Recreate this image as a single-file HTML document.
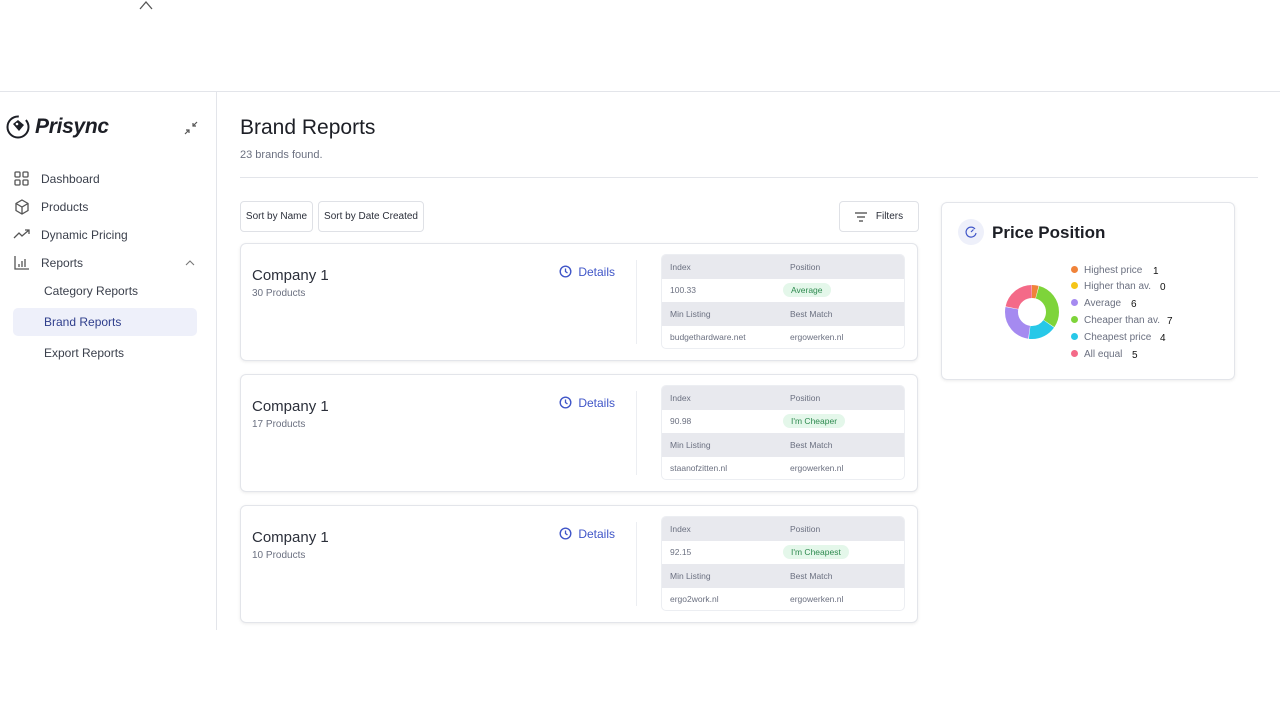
<!DOCTYPE html><html><head><style>
*{box-sizing:border-box;margin:0;padding:0}
body{width:1280px;height:720px;background:#fff;font-family:"Liberation Sans",sans-serif;position:relative;overflow:hidden;color:#2b2f3a}
.a{position:absolute}
.nav{font-size:12px;color:#3a3f4b}
.card{position:absolute;left:240px;width:678px;height:118px;border:1px solid #e3e5ea;border-radius:6px;box-shadow:0 1px 3px rgba(0,0,0,.08);background:#fff}
.card .t{position:absolute;left:11px;top:23px;font-size:15px;color:#2b2f3a}
.card .s{position:absolute;left:11px;top:44px;font-size:10px;color:#6b7080}
.card .d{position:absolute;left:318px;top:21px;font-size:12px;color:#4056c8}
.card .sep{position:absolute;left:395px;top:16px;width:1px;height:84px;background:#eceef2}
.tb{position:absolute;left:420px;top:11px;width:244px;height:95px;border-radius:5px;overflow:hidden;border:1px solid #eceef2;font-size:8.5px;color:#6b7080}
.r{height:23.5px;display:flex;align-items:center;position:relative}
.r span{position:absolute;left:8px}.r span+span{left:128px}
.h{background:#e8e9ee}
.pill{background:#e4f7ea;color:#2e8a4f;border-radius:9px;padding:2px 8px;margin-left:-7px}
.btn{position:absolute;top:201px;height:31px;border:1px solid #dfe1e6;border-radius:4px;font-size:10px;display:flex;align-items:center;justify-content:center;color:#2b2f3a}
.lg{position:absolute;left:1071px;font-size:10px;color:#6b7080}
.lg i{display:inline-block;width:7px;height:7px;border-radius:50%;margin-right:6px}
.lg b{font-weight:normal;color:#111;position:absolute;top:1px}
</style></head><body>
<svg class="a" style="left:138px;top:0" width="16" height="10"><path d="M2 9 L8 2 L14 9" fill="none" stroke="#555" stroke-width="1.3"/></svg>
<div class="a" style="left:0;top:91px;width:1280px;height:1px;background:#e3e5ea"></div>
<div class="a" style="left:216px;top:92px;width:1px;height:538px;background:#e3e5ea"></div>
<svg class="a" style="left:5px;top:114px" width="28" height="28" viewBox="0 0 28 28"><circle cx="13" cy="13" r="10.5" fill="none" stroke="#1d1f26" stroke-width="2" stroke-dasharray="50 8"/><path d="M8 10 L13 6 L19 11 L14 17 Z" fill="#1d1f26"/><circle cx="12" cy="10" r="1.3" fill="#fff"/></svg>
<div class="a" style="left:35px;top:115px;font-size:21px;font-style:italic;font-weight:bold;color:#1d1f26;letter-spacing:-0.3px">Prisync</div>
<svg class="a" style="left:183px;top:120px" width="16" height="16"><path d="M14 2 L10 6 M10 3 V6 H13 M2 14 L6 10 M3 10 H6 V13" fill="none" stroke="#555" stroke-width="1.2"/></svg>
<svg class="a" style="left:14px;top:171px" width="16" height="16"><g fill="none" stroke="#555" stroke-width="1.3"><rect x="1" y="1" width="5" height="5" rx="1"/><rect x="9" y="1" width="5" height="5" rx="1"/><rect x="1" y="9" width="5" height="5" rx="1"/><rect x="9" y="9" width="5" height="5" rx="1"/></g></svg>
<div class="a nav" style="left:41px;top:172px">Dashboard</div>
<svg class="a" style="left:14px;top:199px" width="16" height="16"><g fill="none" stroke="#555" stroke-width="1.3"><path d="M8 1 L14 4.5 V11.5 L8 15 L2 11.5 V4.5 Z M2 4.5 L8 8 L14 4.5 M8 8 V15"/></g></svg>
<div class="a nav" style="left:41px;top:200px">Products</div>
<svg class="a" style="left:13px;top:228px" width="18" height="12"><path d="M1 10 L6 5 L9 8 L16 2 M12 2 H16 V6" fill="none" stroke="#555" stroke-width="1.3"/></svg>
<div class="a nav" style="left:41px;top:228px">Dynamic Pricing</div>
<svg class="a" style="left:14px;top:255px" width="16" height="16"><path d="M1 1 V14 H15 M5 12 V9 M8 12 V6 M11 12 V4" fill="none" stroke="#555" stroke-width="1.3"/></svg>
<div class="a nav" style="left:41px;top:256px">Reports</div>
<svg class="a" style="left:185px;top:259px" width="10" height="7"><path d="M1 6 L5 2 L9 6" fill="none" stroke="#777" stroke-width="1.1"/></svg>
<div class="a nav" style="left:44px;top:284px">Category Reports</div>
<div class="a" style="left:13px;top:308px;width:184px;height:28px;background:#eef0fa;border-radius:5px"></div>
<div class="a nav" style="left:44px;top:315px;color:#2f3e8c">Brand Reports</div>
<div class="a nav" style="left:44px;top:346px">Export Reports</div>

<div class="a" style="left:240px;top:116px;font-size:21px;color:#1d1f26">Brand Reports</div>
<div class="a" style="left:240px;top:149px;font-size:11px;color:#6b7080">23 brands found.</div>
<div class="a" style="left:240px;top:177px;width:1018px;height:1px;background:#e3e5ea"></div>
<div class="btn" style="left:240px;width:73px">Sort by Name</div>
<div class="btn" style="left:318px;width:106px">Sort by Date Created</div>
<div class="btn" style="left:839px;width:80px"><svg width="12" height="10" style="margin-right:9px"><path d="M0 1H12M2 5H10M4 9H8" stroke="#444" stroke-width="1.2"/></svg>Filters</div>

<div class="card" style="top:243px"><div class="t">Company 1</div><div class="s">30 Products</div><div class="d"><svg width="13" height="13" style="vertical-align:-2px;margin-right:3px"><circle cx="6.5" cy="6.5" r="5.3" fill="none" stroke="#4056c8" stroke-width="1.4"/><path d="M6.5 3.5V6.5L8.5 8" fill="none" stroke="#4056c8" stroke-width="1.3"/></svg> Details</div><div class="sep"></div>
<div class="tb" style="top:10px"><div class="r h"><span>Index</span><span>Position</span></div><div class="r"><span>100.33</span><span><i class="pill" style="font-style:normal">Average</i></span></div><div class="r h"><span>Min Listing</span><span>Best Match</span></div><div class="r"><span>budgethardware.net</span><span>ergowerken.nl</span></div></div></div>
<div class="card" style="top:374px"><div class="t">Company 1</div><div class="s">17 Products</div><div class="d"><svg width="13" height="13" style="vertical-align:-2px;margin-right:3px"><circle cx="6.5" cy="6.5" r="5.3" fill="none" stroke="#4056c8" stroke-width="1.4"/><path d="M6.5 3.5V6.5L8.5 8" fill="none" stroke="#4056c8" stroke-width="1.3"/></svg> Details</div><div class="sep"></div>
<div class="tb" style="top:10px"><div class="r h"><span>Index</span><span>Position</span></div><div class="r"><span>90.98</span><span><i class="pill" style="font-style:normal">I'm Cheaper</i></span></div><div class="r h"><span>Min Listing</span><span>Best Match</span></div><div class="r"><span>staanofzitten.nl</span><span>ergowerken.nl</span></div></div></div>
<div class="card" style="top:505px"><div class="t">Company 1</div><div class="s">10 Products</div><div class="d"><svg width="13" height="13" style="vertical-align:-2px;margin-right:3px"><circle cx="6.5" cy="6.5" r="5.3" fill="none" stroke="#4056c8" stroke-width="1.4"/><path d="M6.5 3.5V6.5L8.5 8" fill="none" stroke="#4056c8" stroke-width="1.3"/></svg> Details</div><div class="sep"></div>
<div class="tb" style="top:10px"><div class="r h"><span>Index</span><span>Position</span></div><div class="r"><span>92.15</span><span><i class="pill" style="font-style:normal">I'm Cheapest</i></span></div><div class="r h"><span>Min Listing</span><span>Best Match</span></div><div class="r"><span>ergo2work.nl</span><span>ergowerken.nl</span></div></div></div>

<div class="a" style="left:941px;top:202px;width:294px;height:178px;border:1px solid #e3e5ea;border-radius:6px;box-shadow:0 1px 3px rgba(0,0,0,.08)"></div>
<div class="a" style="left:958px;top:219px;width:26px;height:26px;border-radius:50%;background:#eef0fa"></div>
<svg class="a" style="left:964px;top:225px" width="14" height="14"><path d="M11 4 A5 5 0 1 0 12 8" fill="none" stroke="#4056c8" stroke-width="1.2"/><path d="M7 7 L9.5 4.5" stroke="#4056c8" stroke-width="1.2"/></svg>
<div class="a" style="left:992px;top:223px;font-size:17px;font-weight:bold;color:#1d1f26">Price Position</div>
<svg class="a" style="left:1005px;top:285px" width="54" height="54" viewBox="0 0 54 54"><g transform="rotate(-90 27 27)" fill="none" stroke-width="13">
<circle cx="27" cy="27" r="20.5" stroke="#f0833a" stroke-dasharray="5.1 123.7" stroke-dashoffset="0"/>
<circle cx="27" cy="27" r="20.5" stroke="#7ed43a" stroke-dasharray="38.7 90.1" stroke-dashoffset="-5.6"/>
<circle cx="27" cy="27" r="20.5" stroke="#28c8e8" stroke-dasharray="21.9 106.9" stroke-dashoffset="-44.8"/>
<circle cx="27" cy="27" r="20.5" stroke="#a58af0" stroke-dasharray="33.1 95.7" stroke-dashoffset="-67.2"/>
<circle cx="27" cy="27" r="20.5" stroke="#f46a88" stroke-dasharray="27.5 101.3" stroke-dashoffset="-100.8"/></g></svg>
<div class="lg" style="top:265px"><i style="background:#f0833a"></i>Highest price<b style="left:82px">1</b></div>
<div class="lg" style="top:281px"><i style="background:#f5c518"></i>Higher than av.<b style="left:89px">0</b></div>
<div class="lg" style="top:298px"><i style="background:#a58af0"></i>Average<b style="left:60px">6</b></div>
<div class="lg" style="top:315px"><i style="background:#7ed43a"></i>Cheaper than av.<b style="left:96px">7</b></div>
<div class="lg" style="top:332px"><i style="background:#28c8e8"></i>Cheapest price<b style="left:89px">4</b></div>
<div class="lg" style="top:349px"><i style="background:#f46a88"></i>All equal<b style="left:61px">5</b></div>
</body></html>
